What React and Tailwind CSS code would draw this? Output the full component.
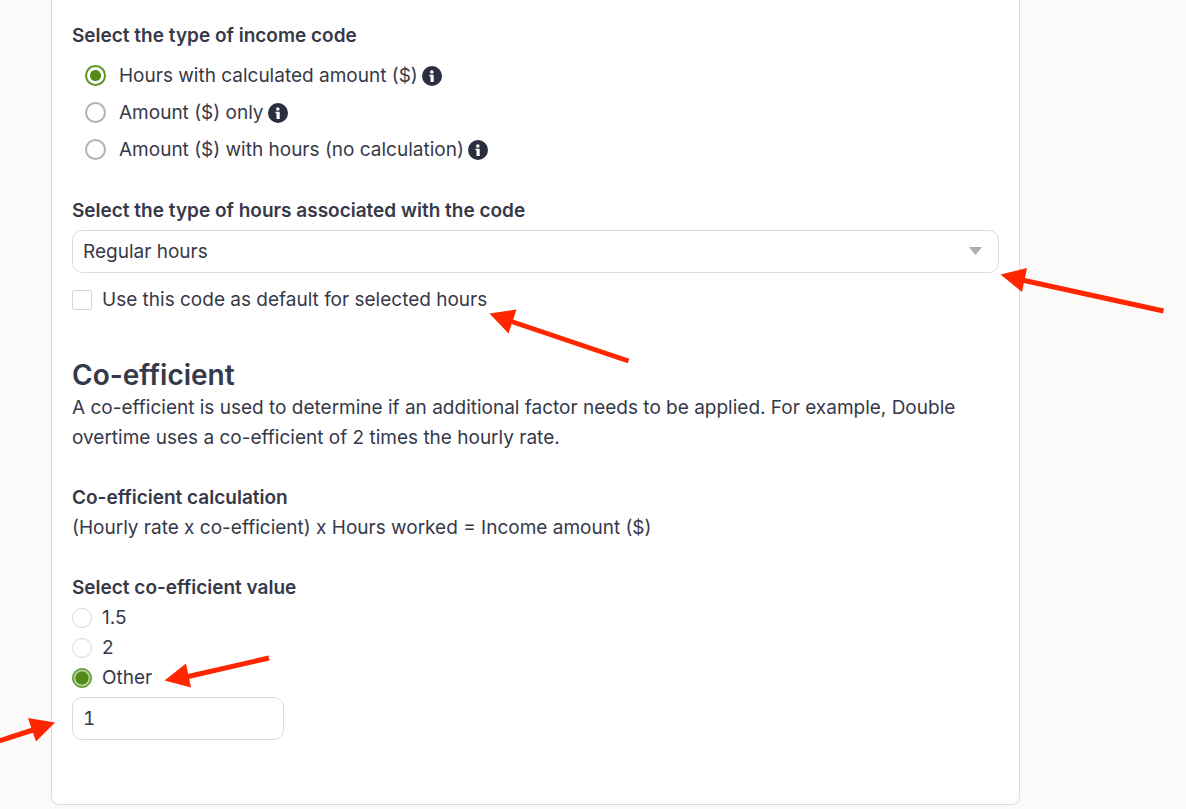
import { useState } from "react";

function InfoIcon() {
  return (
    <svg viewBox="0 0 20 20" className="size-5 shrink-0" aria-hidden="true">
      <circle cx="10" cy="10" r="10" fill="#2b2e3f" />
      <circle cx="9.8" cy="6" r="1.8" fill="#fff" />
      <path d="M7.400 8.800h4.300v7.200H8.500v-5.700h-1.100z" fill="#fff" />
    </svg>
  );
}

const incomeTypes = [
  "Hours with calculated amount ($)",
  "Amount ($) only",
  "Amount ($) with hours (no calculation)",
];

function IncomeTypes() {
  const [value, setValue] = useState(incomeTypes[0]);
  return (
    <fieldset>
      <legend className="font-semibold">Select the type of income code</legend>
      <div className="mt-1.5 pl-3">
        {incomeTypes.map((label) => (
          <div key={label} className="flex h-[37px] items-center gap-1">
            <label className="flex items-center gap-3">
              <input
                type="radio"
                name="income-type"
                checked={value === label}
                onChange={() => setValue(label)}
                className="mx-px size-[21px] shrink-0 appearance-none rounded-full border-2 border-[#b9afaf] bg-white checked:border-[#5c9522] checked:bg-[radial-gradient(circle,#518a14_5px,#fff_6px)]"
              />
              {label}
            </label>
            <button type="button" aria-label={"About " + label}>
              <InfoIcon />
            </button>
          </div>
        ))}
      </div>
    </fieldset>
  );
}

const values = ["1.5", "2", "Other"];

function CoefficientValue() {
  const [value, setValue] = useState("Other");
  return (
    <fieldset className="mt-[30px]">
      <legend className="font-semibold">Select co-efficient value</legend>
      {values.map((label) => (
        <label key={label} className="flex w-fit items-center gap-2.5">
          <input
            type="radio"
            name="coefficient"
            checked={value === label}
            onChange={() => setValue(label)}
            className="size-5 shrink-0 appearance-none rounded-full border border-[#d9d9d9] bg-white checked:border-[#5c9522] checked:bg-[radial-gradient(circle,#518a14_6px,#b3cc98_7px,#b3cc98_8px,#5c9522_9px)]"
          />
          {label}
        </label>
      ))}
      <input
        type="text"
        aria-label="Other co-efficient value"
        defaultValue="1"
        className="mt-1 block h-[43px] w-[212px] rounded-[10px] border border-[#dfd9db] bg-white px-2.5 tabular-nums"
      />
    </fieldset>
  );
}

function Arrows() {
  return (
    <svg
      width="1186"
      height="809"
      viewBox="0 0 1186 809"
      className="pointer-events-none absolute top-0 left-0 max-w-none"
      fill="#ff2600"
      stroke="#ff2600"
      aria-hidden="true"
    >
      <g strokeWidth="5">
        <path d="M1022 280 1163.5 311" />
        <path d="M510 321 628.5 361" />
        <path d="M186 677 269 658" />
        <path d="M-4 742 36 729" />
      </g>
      <g stroke="none">
        <path d="M1000.500 274.500 1027 268 1022 292z" />
        <path d="M489.500 313.500 516.500 309.500 508.500 333.500z" />
        <path d="M164.500 680.500 186 663.500 191 687.500z" />
        <path d="M55 722.500 28 718 36 741.500z" />
      </g>
    </svg>
  );
}

export default function App() {
  return (
    <div className="relative min-h-screen overflow-hidden bg-[#fbfaf8] pr-[166px] pb-1 pl-[51px] font-['Inter',sans-serif] text-[19px] leading-[30px] text-[#363949]">
      <main className="rounded-b-lg border border-t-0 border-[#dfdadc] bg-white px-5 pt-[21px] pb-16">
        <IncomeTypes />

        <section className="mt-7">
          <label htmlFor="hours-type" className="block font-semibold">
            Select the type of hours associated with the code
          </label>
          <div className="relative mt-1">
            <select
              id="hours-type"
              className="block h-[43px] w-full appearance-none rounded-[10px] border border-[#dfd9db] bg-white px-2.5"
            >
              <option>Regular hours</option>
            </select>
            <svg
              viewBox="0 0 13 8"
              className="pointer-events-none absolute top-[17px] right-[17px] h-2 w-[13px]"
              aria-hidden="true"
            >
              <path d="M0 0h13L6.500 8z" fill="#b3aaaa" />
            </svg>
          </div>
          <label className="mt-3 flex w-fit items-center gap-2.5">
            <input
              type="checkbox"
              className="size-5 shrink-0 appearance-none rounded-xs border border-[#d6d6d6] bg-white checked:bg-[#518a14]"
            />
            Use this code as default for selected hours
          </label>
        </section>

        <section className="mt-[42px]">
          <h2 className="text-[28px] leading-9 font-semibold">Co-efficient</h2>
          <p>
            A co-efficient is used to determine if an additional factor needs to be applied. For
            example, Double overtime uses a co-efficient of 2 times the hourly rate.
          </p>
          <h3 className="mt-[30px] font-semibold">Co-efficient calculation</h3>
          <p>(Hourly rate x co-efficient) x Hours worked = Income amount ($)</p>
        </section>

        <CoefficientValue />
      </main>
      <Arrows />
    </div>
  );
}
